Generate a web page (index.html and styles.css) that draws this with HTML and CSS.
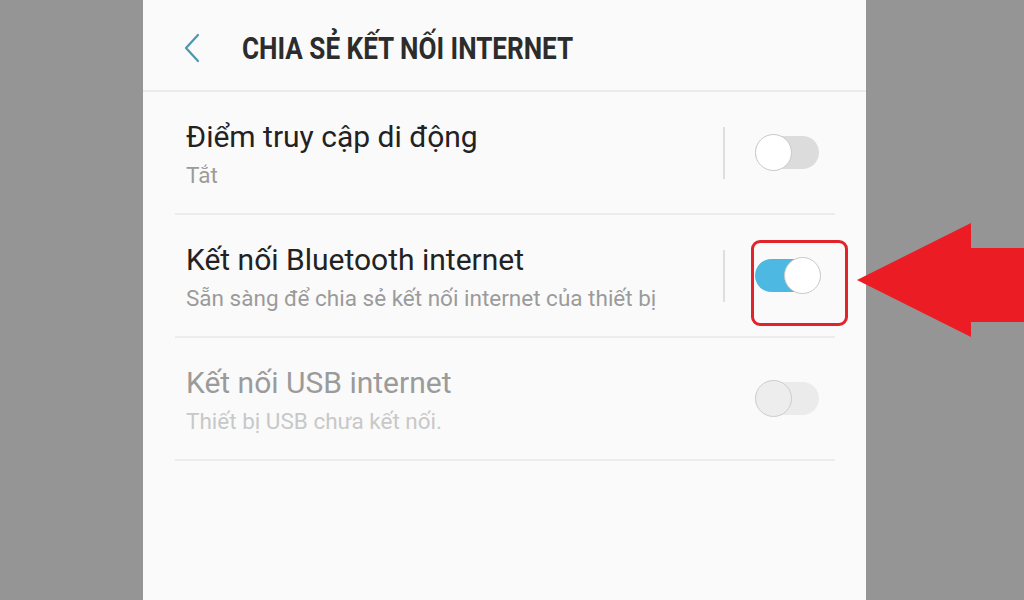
FILE: index.html
```
<!DOCTYPE html>
<html lang="vi">
<head>
<meta charset="utf-8">
<title>Chia sẻ kết nối internet</title>
<link rel="stylesheet" href="styles.css">
</head>
<body>
<div class="stage">
  <div class="panel">
    <header class="header">
      <svg class="back" width="18" height="30" viewBox="0 0 18 30"><path d="M15 2 L3 15 L15 28" fill="none" stroke="#4a97ad" stroke-width="2.2" stroke-linecap="round" stroke-linejoin="round"/></svg>
      <h1 class="title"><span>CHIA SẺ KẾT NỐI INTERNET</span></h1>
    </header>
    <div class="list">
      <div class="row">
        <div class="text">
          <div class="primary">Điểm truy cập di động</div>
          <div class="secondary">Tắt</div>
        </div>
        <div class="sep"></div>
        <div class="toggle-wrap"><div class="toggle"><div class="knob"></div></div></div>
      </div>
      <div class="row">
        <div class="text">
          <div class="primary">Kết nối Bluetooth internet</div>
          <div class="secondary">Sẵn sàng để chia sẻ kết nối internet của thiết bị</div>
        </div>
        <div class="sep"></div>
        <div class="toggle-wrap"><div class="toggle on"><div class="knob"></div></div><div class="highlight"></div></div>
      </div>
      <div class="row disabled">
        <div class="text">
          <div class="primary">Kết nối USB internet</div>
          <div class="secondary">Thiết bị USB chưa kết nối.</div>
        </div>
        <div class="sep hidden"></div>
        <div class="toggle-wrap"><div class="toggle"><div class="knob"></div></div></div>
      </div>
    </div>
  </div>
  <svg class="arrow" width="169" height="118" viewBox="0 0 169 118"><path d="M2 59 Q60 30 116 2 L116 27 L169 27 L169 101 L116 101 L116 116 Q60 88 2 59 Z" fill="#ec1c24"/></svg>
</div>
</body>
</html>
```
FILE: styles.css
```
* { box-sizing: border-box; }
html, body { margin: 0; padding: 0; }
body {
  background: #959595;
  font-family: Roboto, "Noto Sans", "Liberation Sans", sans-serif;
  width: 1024px;
  height: 600px;
  overflow: hidden;
}
.stage {
  position: relative;
  width: 1024px;
  height: 600px;
  display: flex;
}
.panel {
  margin-left: 143px;
  width: 723px;
  height: 600px;
  background: #fafafa;
}
.header {
  height: 92px;
  display: flex;
  align-items: center;
  padding-left: 40px;
  border-bottom: 2px solid #ebebeb;
}
.back { margin-top: 6px; flex: none; }
.title {
  margin: 6px 0 0 41px;
  font-size: 32px;
  font-weight: 700;
  color: #2c2c2c;
  white-space: nowrap;
}
.title span {
  display: inline-block;
  transform: scaleX(0.815);
  transform-origin: left center;
}
.list { padding: 0 31px 0 32px; }
.row {
  height: 123px;
  display: flex;
  align-items: center;
  padding-left: 11px;
  border-bottom: 2px solid #ececec;
}
.text { flex: 1; padding-top: 4px; }
.primary {
  font-size: 30px;
  line-height: 34px;
  color: #222;
}
.secondary {
  font-size: 22.5px;
  line-height: 28px;
  margin-top: 6.5px;
  color: #9b9b9b;
}
.sep {
  width: 2px;
  height: 52px;
  background: #dedede;
  margin-right: 30px;
}
.sep.hidden { visibility: hidden; }
.toggle-wrap {
  position: relative;
  margin-right: 14px;
  width: 66px;
  height: 38px;
  display: flex;
  align-items: center;
}
.toggle {
  position: relative;
  width: 64px;
  height: 33px;
  border-radius: 17px;
  background: #dcdcdc;
}
.knob {
  position: absolute;
  left: 0;
  top: -2px;
  width: 37px;
  height: 37px;
  border-radius: 50%;
  background: #fff;
  border: 1.5px solid #c9c9c9;
}
.toggle.on { background: #4db8e2; }
.toggle.on .knob { left: auto; right: -2px; }
.disabled .primary { color: #9b9b9b; }
.disabled .secondary { color: #c8c8c8; }
.disabled .toggle { background: #ebebeb; }
.disabled .knob { background: #ededed; border-color: #cdcdcd; }
.highlight {
  position: absolute;
  left: -4px;
  top: -17px;
  width: 97px;
  height: 86px;
  border: 3px solid #e1232a;
  border-radius: 9px;
}
.arrow {
  position: absolute;
  left: 855px;
  top: 221px;
}
```
